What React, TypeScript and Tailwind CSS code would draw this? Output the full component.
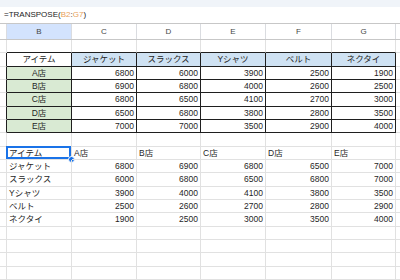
const COLS = [7, 65, 65, 64, 65, 66, 64];
const LETTERS = ['', 'B', 'C', 'D', 'E', 'F', 'G'];

const ITEMS = ['ジャケット', 'スラックス', 'Yシャツ', 'ベルト', 'ネクタイ'];
const STORES = ['A店', 'B店', 'C店', 'D店', 'E店'];
const DATA = [
  [6800, 6000, 3900, 2500, 1900],
  [6900, 6800, 4000, 2600, 2500],
  [6800, 6500, 4100, 2700, 3000],
  [6500, 6800, 3800, 2800, 3500],
  [7000, 7000, 3500, 2900, 4000],
];

type Cell = { text?: string; align?: 'left' | 'center' | 'right'; bg?: string };

const ROWS = 18;

function buildGrid(): Cell[][] {
  const g: Cell[][] = Array.from({ length: ROWS }, () => Array.from({ length: 7 }, () => ({})));
  // source table at rows 1..6 (0-based), cols 1..6
  g[1][1] = { text: 'アイテム', align: 'center', bg: 'bg-white' };
  ITEMS.forEach((it, i) => (g[1][i + 2] = { text: it, align: 'center', bg: 'bg-[#cfe2f3]' }));
  STORES.forEach((s, r) => {
    g[r + 2][1] = { text: s, align: 'center', bg: 'bg-[#d9ead3]' };
    DATA[r].forEach((v, c) => (g[r + 2][c + 2] = { text: String(v), align: 'right', bg: 'bg-white' }));
  });
  // transposed result at rows 8..13
  g[8][1] = { text: 'アイテム', align: 'left' };
  STORES.forEach((s, i) => (g[8][i + 2] = { text: s, align: 'left' }));
  ITEMS.forEach((it, r) => {
    g[r + 9][1] = { text: it, align: 'left' };
    STORES.forEach((_, c) => (g[r + 9][c + 2] = { text: String(DATA[c][r]), align: 'right' }));
  });
  return g;
}

const inTable = (r: number, c: number) => r >= 1 && r <= 6 && c >= 1 && c <= 6;

export default function App() {
  const grid = buildGrid();
  return (
    <div
      className="w-[400px] h-[280px] overflow-hidden bg-white text-[#1f1f1f]"
      style={{ fontFamily: '"Liberation Sans", "Noto Sans CJK JP", sans-serif' }}
    >
      <div className="h-[7px] bg-[#f0f4f9]" />
      <div className="h-[17px] flex items-center pl-[4px] text-[8px] text-[#222] border-b border-[#c7c7c7]">
        =TRANSPOSE(<span className="text-[#e8a15a]">B2</span>:<span className="text-[#e8a15a]">G7</span>)
      </div>
      <div className="h-[16px] flex border-b border-[#c7c7c7]">
        {COLS.map((w, i) => (
          <div
            key={i}
            style={{ width: w }}
            className={`shrink-0 h-full flex items-center justify-center text-[8px] text-[#444746] border-r border-[#dadce0] ${
              i === 1 ? 'bg-[#d3e3fd]' : 'bg-white'
            }`}
          >
            {LETTERS[i]}
          </div>
        ))}
        <div className="flex-1" />
      </div>
      {grid.map((row, r) => (
        <div key={r} className="flex h-[13.33px]">
          {row.map((cell, c) => {
            const darkR = inTable(r, c) || inTable(r, c + 1);
            const darkB = inTable(r, c) || inTable(r + 1, c);
            const selected = r === 8 && c === 1;
            return (
              <div
                key={c}
                style={{ width: COLS[c] }}
                className={`relative shrink-0 h-full border-r border-b flex items-center px-[2px] text-[8.5px] leading-none whitespace-nowrap ${
                  darkR ? 'border-r-[#1f1f1f]' : 'border-r-[#e1e1e1]'
                } ${darkB ? 'border-b-[#1f1f1f]' : 'border-b-[#e1e1e1]'} ${cell.bg ?? ''} ${
                  cell.align === 'center' ? 'justify-center' : cell.align === 'right' ? 'justify-end' : 'justify-start'
                }`}
              >
                {cell.text}
                {selected && (
                  <>
                    <div className="absolute -left-px -top-px right-0 bottom-0 border-2 border-[#1a73e8]" />
                    <div className="absolute -right-[4px] -bottom-[4px] w-[7px] h-[7px] rounded-full bg-[#1a73e8] border border-white" />
                  </>
                )}
              </div>
            );
          })}
          <div className="flex-1 h-full border-b border-[#e1e1e1]" />
        </div>
      ))}
    </div>
  );
}
